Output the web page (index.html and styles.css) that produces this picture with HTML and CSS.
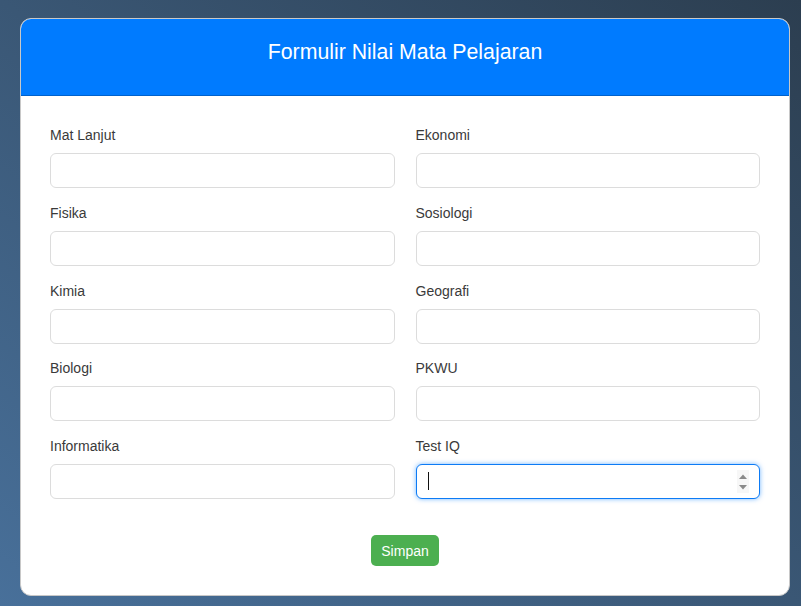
FILE: index.html
```html
<!DOCTYPE html>
<html lang="id">
<head>
<meta charset="utf-8">
<title>Formulir Nilai Mata Pelajaran</title>
<link rel="stylesheet" href="styles.css">
</head>
<body>
<div class="card">
  <div class="card-header">
    <h2 class="card-title">Formulir Nilai Mata Pelajaran</h2>
  </div>
  <form class="card-body">
    <div class="grid">
      <div class="field"><label class="label">Mat Lanjut</label><input class="input" type="text"></div>
      <div class="field"><label class="label">Ekonomi</label><input class="input" type="text"></div>
      <div class="field"><label class="label">Fisika</label><input class="input" type="text"></div>
      <div class="field"><label class="label">Sosiologi</label><input class="input" type="text"></div>
      <div class="field"><label class="label">Kimia</label><input class="input" type="text"></div>
      <div class="field"><label class="label">Geografi</label><input class="input" type="text"></div>
      <div class="field"><label class="label">Biologi</label><input class="input" type="text"></div>
      <div class="field"><label class="label">PKWU</label><input class="input" type="text"></div>
      <div class="field"><label class="label">Informatika</label><input class="input" type="text"></div>
      <div class="field">
        <label class="label">Test IQ</label>
        <div class="input-wrap">
          <input class="input input-focused" type="text">
          <span class="caret"></span>
          <span class="spinner">
            <svg width="10" height="18" viewBox="0 0 10 18"><path d="M1 6 L5 1.5 L9 6 Z" fill="#8a8a8a"/><path d="M1 12 L5 16.5 L9 12 Z" fill="#8a8a8a"/></svg>
          </span>
        </div>
      </div>
    </div>
    <div class="actions">
      <button class="btn" type="button">Simpan</button>
    </div>
  </form>
</div>
</body>
</html>
```
FILE: styles.css
```css
html {
  min-height: 100%;
  background: linear-gradient(to top right, #48709a, #2c3e50);
}
body {
  margin: 0;
  padding: 18px 0 0 20px;
  font-family: "Liberation Sans", Arial, sans-serif;
  color: #333;
}
.card {
  width: 770px;
  box-sizing: border-box;
  background: #fff;
  border: 1px solid #c8c8c8;
  border-radius: 11px;
  overflow: hidden;
}
.card-header {
  background: #007bff;
  border-bottom: 1px solid #0062cc;
  padding: 21px 20px 30px;
  text-align: center;
}
.card-title {
  margin: 0;
  font-size: 21.3px;
  font-weight: normal;
  line-height: 25px;
  color: #fff;
}
.card-body {
  display: block;
  margin: 0;
  padding: 31px 29px 29px;
}
.grid {
  display: grid;
  grid-template-columns: 1fr 1fr;
  column-gap: 21px;
  row-gap: 16.75px;
}
.field {
  display: flex;
  flex-direction: column;
}
.label {
  font-size: 14px;
  line-height: 16px;
  margin-bottom: 10px;
  color: #3a3a3a;
}
.input-wrap {
  position: relative;
}
.input {
  display: block;
  width: 100%;
  box-sizing: border-box;
  height: 35px;
  border: 1px solid #dcdcdc;
  border-radius: 6px;
  background: #fff;
  padding: 0 10px;
  font-family: inherit;
  font-size: 14px;
  outline: none;
}
.input-focused {
  border-color: #0d7bf5;
  box-shadow: 0 0 5px rgba(0, 123, 255, 0.55);
}
.caret {
  position: absolute;
  left: 12px;
  top: 8px;
  width: 1px;
  height: 18px;
  background: #111;
}
.spinner {
  position: absolute;
  right: 11px;
  top: 6px;
  width: 12px;
  height: 23px;
  background: #f7f7f7;
  display: flex;
  align-items: center;
  justify-content: center;
}
.actions {
  display: flex;
  justify-content: center;
  margin-top: 36px;
}
.btn {
  background: #4caf50;
  color: #fff;
  border: none;
  border-radius: 5px;
  height: 31px;
  padding: 0 10px;
  font-family: "Liberation Sans", Arial, sans-serif;
  font-size: 14px;
}
```
